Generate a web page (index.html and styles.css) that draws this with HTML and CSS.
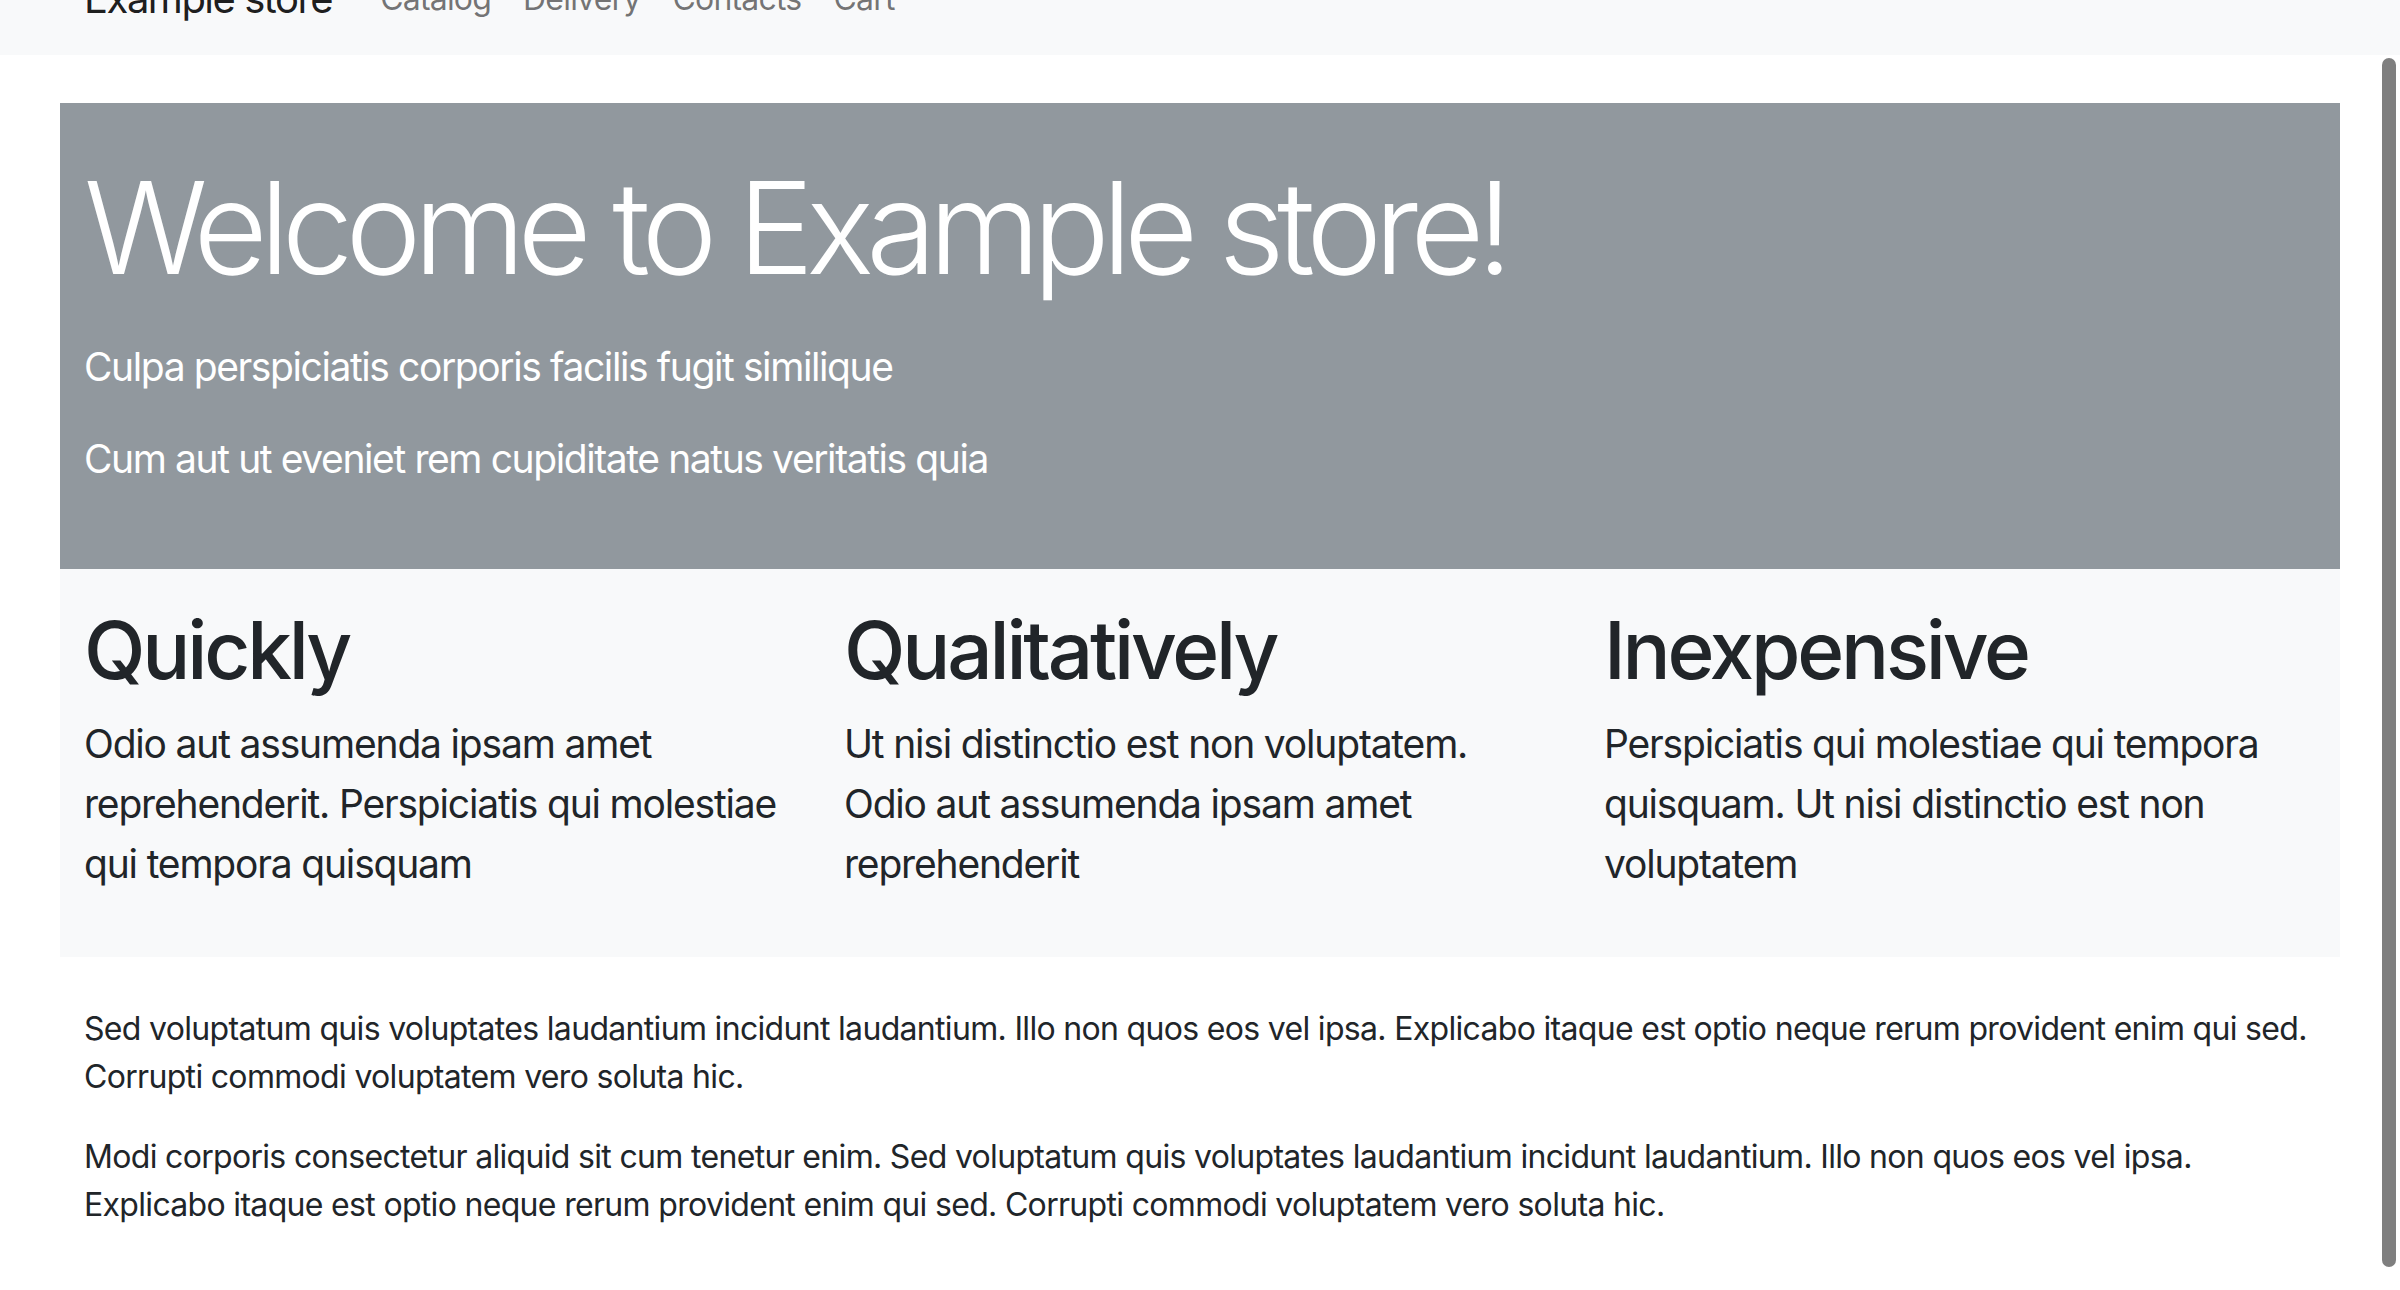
FILE: index.html
```html
<!DOCTYPE html>
<html lang="en">
<head>
<meta charset="utf-8">
<title>Example store</title>
<link rel="stylesheet" href="styles.css">
</head>
<body>
<nav class="navbar">
  <div class="container nav-inner">
    <a class="brand" href="#">Example store</a>
    <ul class="nav">
      <li><a class="nav-link" href="#">Catalog</a></li>
      <li><a class="nav-link" href="#">Delivery</a></li>
      <li><a class="nav-link" href="#">Contacts</a></li>
      <li><a class="nav-link" href="#">Cart</a></li>
    </ul>
  </div>
</nav>
<main class="container page">
  <section class="hero">
    <h1 class="display">Welcome to Example store!</h1>
    <p class="lead">Culpa perspiciatis corporis facilis fugit similique</p>
    <p class="lead">Cum aut ut eveniet rem cupiditate natus veritatis quia</p>
  </section>
  <section class="features">
    <div class="feature">
      <h2>Quickly</h2>
      <p class="lead">Odio aut assumenda ipsam amet reprehenderit. Perspiciatis qui molestiae qui tempora quisquam</p>
    </div>
    <div class="feature">
      <h2>Qualitatively</h2>
      <p class="lead">Ut nisi distinctio est non voluptatem. Odio aut assumenda ipsam amet reprehenderit</p>
    </div>
    <div class="feature">
      <h2>Inexpensive</h2>
      <p class="lead">Perspiciatis qui molestiae qui tempora quisquam. Ut nisi distinctio est non voluptatem</p>
    </div>
  </section>
  <section class="body-text">
    <p>Sed voluptatum quis voluptates laudantium incidunt laudantium. Illo non quos eos vel ipsa. Explicabo itaque est optio neque rerum provident enim qui sed. Corrupti commodi voluptatem vero soluta hic.</p>
    <p>Modi corporis consectetur aliquid sit cum tenetur enim. Sed voluptatum quis voluptates laudantium incidunt laudantium. Illo non quos eos vel ipsa. Explicabo itaque est optio neque rerum provident enim qui sed. Corrupti commodi voluptatem vero soluta hic.</p>
  </section>
</main>
<div class="scrollbar"><div class="thumb"></div></div>
</body>
</html>
```
FILE: styles.css
```css
html, body {
  margin: 0;
  padding: 0;
  overflow: hidden;
}
body {
  font-family: Inter, "Liberation Sans", sans-serif;
  color: #212529;
  background: #fff;
  font-size: 32px;
  line-height: 1.5;
  letter-spacing: -0.68px;
}
.container {
  width: 2280px;
  margin-left: auto;
  margin-right: auto;
  box-sizing: border-box;
}
.navbar {
  background: #f8f9fa;
  margin-top: -57px;
  padding: 16px 0;
}
.nav-inner {
  display: flex;
  align-items: center;
  padding: 0 24px;
}
.brand {
  font-size: 40px;
  line-height: 60px;
  letter-spacing: -1.5px;
  padding: 10px 0;
  margin-right: 32px;
  color: rgba(0, 0, 0, 0.9);
  text-decoration: none;
}
.nav {
  display: flex;
  list-style: none;
  margin: 0;
  padding: 0;
}
.nav-link {
  display: block;
  padding: 16px 16px;
  font-size: 32px;
  line-height: 48px;
  letter-spacing: -0.8px;
  color: rgba(0, 0, 0, 0.55);
  text-decoration: none;
}
.page {
  margin-top: 48px;
}
.hero {
  background: #91989e;
  color: #fff;
  padding: 48px 24px;
}
.display {
  font-size: 128px;
  font-weight: 300;
  line-height: 1.2;
  letter-spacing: -7.8px;
  margin: 0 0 32px;
}
.lead {
  font-size: 39px;
  line-height: 60px;
  font-weight: 400;
  letter-spacing: -1.4px;
  margin: 0 0 32px;
}
.features {
  background: #f8f9fa;
  display: grid;
  grid-template-columns: repeat(3, 1fr);
  padding: 33px 0 31px;
}
.feature {
  padding: 0 24px;
}
.feature h2 {
  font-size: 80px;
  font-weight: 500;
  line-height: 1.2;
  letter-spacing: -3.2px;
  margin: 0 0 16px;
}
.feature .lead {
  letter-spacing: -1.18px;
}
.body-text {
  margin-top: 48px;
  padding: 0 24px;
}
.body-text p {
  margin: 0 0 32px;
}
.scrollbar {
  position: fixed;
  top: 58px;
  right: 4px;
  width: 14px;
  height: 1209px;
}
.thumb {
  width: 100%;
  height: 100%;
  border-radius: 7px;
  background: #7f7f7f;
}
```
